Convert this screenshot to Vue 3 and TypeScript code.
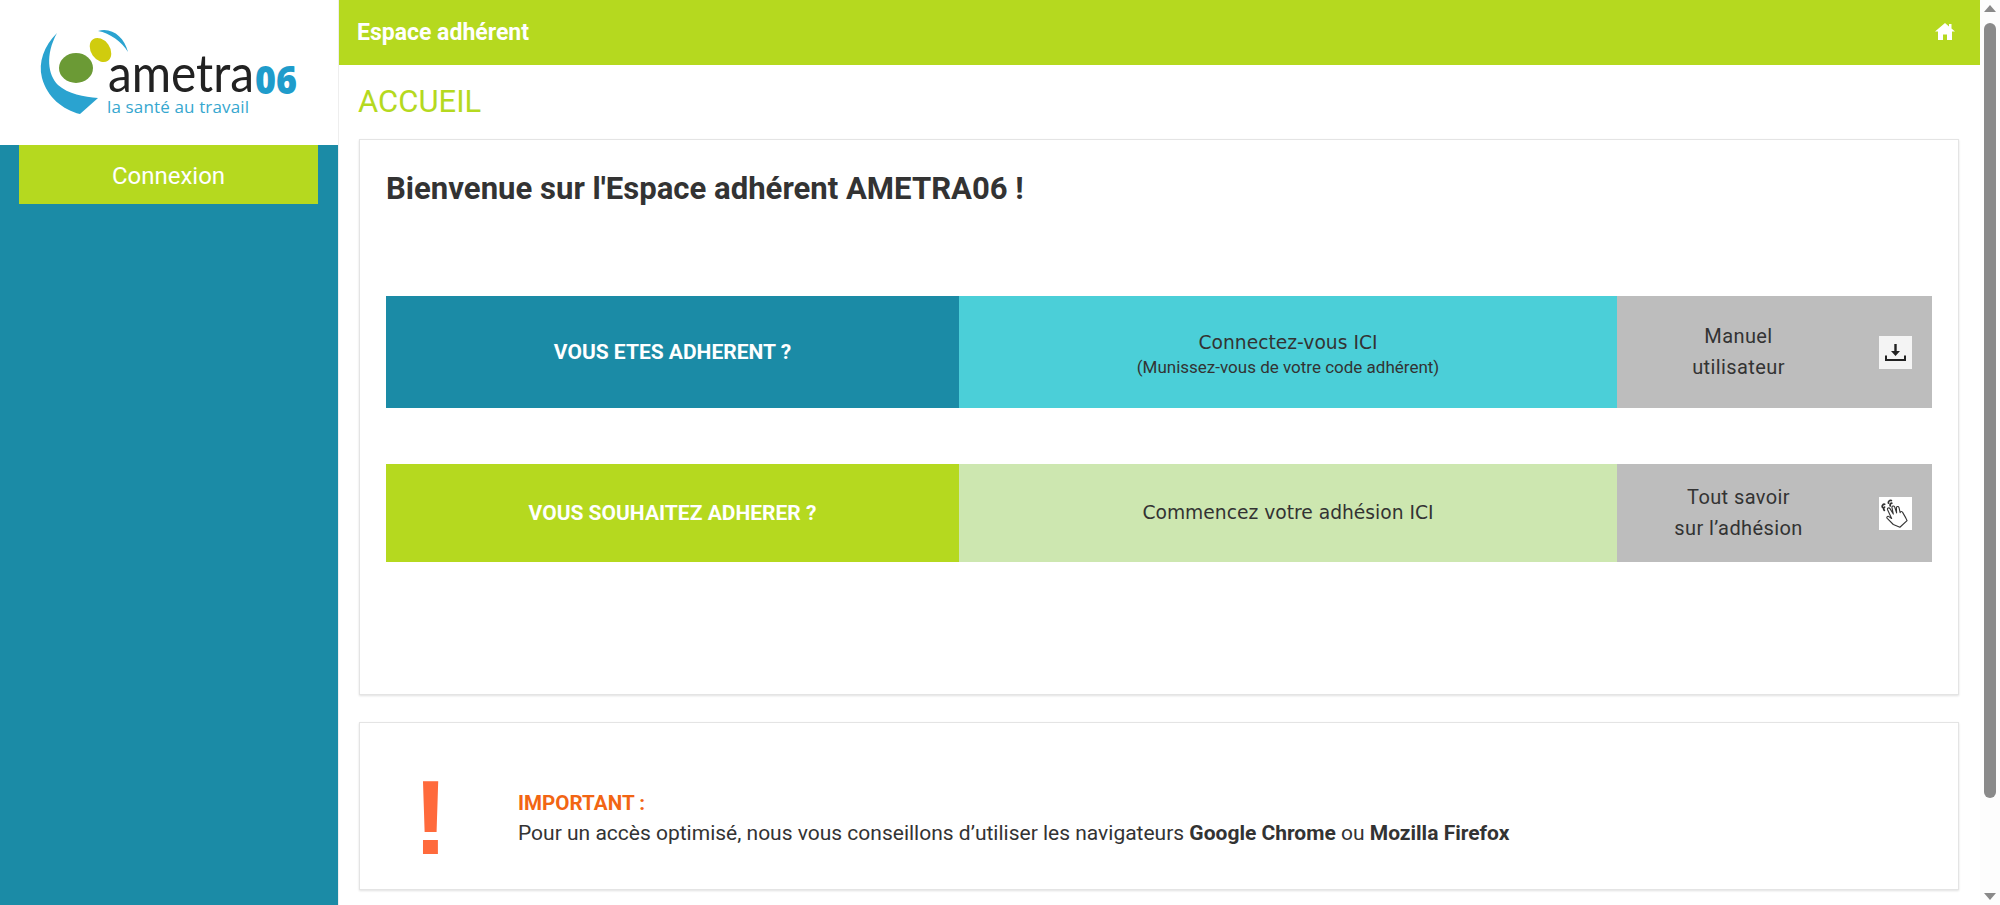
<script setup lang="ts">
interface Segment {
  title: string
  note?: string
}

interface Row {
  lead: string
  action: Segment
  side: string[]
  icon: 'download' | 'hand'
  tone: string
}

const rows: Row[] = [
  {
    lead: 'VOUS ETES ADHERENT ?',
    action: { title: 'Connectez-vous ICI', note: '(Munissez-vous de votre code adhérent)' },
    side: ['Manuel', 'utilisateur'],
    icon: 'download',
    tone: 'blue'
  },
  {
    lead: 'VOUS SOUHAITEZ ADHERER ?',
    action: { title: 'Commencez votre adhésion ICI' },
    side: ['Tout savoir', 'sur l’adhésion'],
    icon: 'hand',
    tone: 'green'
  }
]
</script>

<template>
  <div class="shell">
    <aside class="sidebar">
      <div class="logo">
        <svg width="338" height="145" viewBox="0 0 338 145">
          <path fill="#2aa3d0" d="M57 33C44 46 38 62 42 78C47 97 63 110 80 114L98 98C84 97 68 94 58 85C48 75 45 55 57 33Z" />
          <path fill="#2aa3d0" d="M98 31C112 27 124 37 128 52C122 42 110 33 98 31Z" />
          <ellipse cx="100.5" cy="50" rx="9.5" ry="13" transform="rotate(-35 100.5 50)" fill="#d0cc0e" />
          <ellipse cx="76" cy="68" rx="17" ry="15" fill="#6b9a35" />
          <text x="108" y="92" textLength="146" lengthAdjust="spacingAndGlyphs" class="logo-name">ametra</text>
          <text x="255" y="94" textLength="42" lengthAdjust="spacingAndGlyphs" class="logo-num">06</text>
          <text x="107" y="113" textLength="142" class="logo-tag">la santé au travail</text>
        </svg>
      </div>
      <a class="login">Connexion</a>
    </aside>

    <main class="main">
      <header class="topbar">
        <span class="topbar-title">Espace adhérent</span>
        <svg class="home" width="20" height="17" viewBox="0 0 20 17">
          <path fill="#fff" d="M10 0L0 8.5H3V17H8V11.5H12V17H17V8.5H20L16.5 5.5V1H14V3.4Z" />
        </svg>
      </header>

      <div class="content">
        <h1 class="page-title">ACCUEIL</h1>

        <section class="card welcome">
          <h2 class="welcome-title">Bienvenue sur l'Espace adhérent AMETRA06 !</h2>
          <div v-for="row in rows" :key="row.lead" class="row" :class="row.tone">
            <div class="lead">{{ row.lead }}</div>
            <div class="action">
              <span class="action-title">{{ row.action.title }}</span>
              <span v-if="row.action.note" class="action-note">{{ row.action.note }}</span>
            </div>
            <div class="side">
              <div class="side-label">
                <span v-for="line in row.side" :key="line">{{ line }}</span>
              </div>
              <div class="side-icon" :class="row.icon">
                <svg v-if="row.icon === 'download'" width="21" height="21" viewBox="0 0 21 21">
                  <path fill="#222" d="M9.3 2H11.7V9H15L10.5 14L6 9H9.3Z" />
                  <path fill="none" stroke="#222" stroke-width="2" d="M1 13.5V18H20V13.5" />
                </svg>
                <svg v-else width="33" height="33" viewBox="0 0 30 30" fill="none" stroke="#333" stroke-width="1" stroke-linejoin="round" stroke-linecap="round">
                  <path d="M13 25L7.5 19.5C6.6 18.5 7.6 17 9 17.8L11.5 19.5L7.8 11.5C7.2 10 9.2 9.2 10 10.6L13 15.5L11.8 9.6C11.5 8 13.6 7.6 14.2 9L16 14.5L15.8 9.8C15.8 8.3 17.8 8.2 18.2 9.6L19.2 14.2C19.4 12.8 21.2 12.8 21.6 14.2C23 16.5 24.5 19 25.5 21.5L19 27.5Z" />
                  <path d="M3.2 9.5C2.4 8 3.6 6.4 5.2 6.6M4.8 12.2C3.8 11 4.2 9.8 5 9.2M8.6 5.5C8.3 4.2 9.6 2.6 11.2 3.2M10.2 8C9.8 6.8 10.6 5.6 11.6 5.6" stroke-width="1.6" />
                </svg>
              </div>
            </div>
          </div>
        </section>

        <section class="card notice">
          <span class="mark">!</span>
          <div class="notice-text">
            <strong class="notice-title">IMPORTANT :</strong>
            <p>Pour un accès optimisé, nous vous conseillons d’utiliser les navigateurs <b>Google Chrome</b> ou <b>Mozilla Firefox</b></p>
          </div>
        </section>
      </div>
    </main>

    <div class="scrollbar">
      <span class="arrow up"></span>
      <span class="thumb"></span>
      <span class="arrow down"></span>
    </div>
  </div>
</template>

<style>
html,
body {
  margin: 0;
  height: 100%;
  overflow: hidden;
}
</style>

<style scoped>
.shell {
  display: flex;
  height: 905px;
  overflow: hidden;
  font-family: Roboto, "Liberation Sans", sans-serif;
  color: #333;
  background: #fff;
}

.sidebar {
  flex: 0 0 338px;
  background: #1b8ba6;
}

.logo {
  height: 145px;
  background: #fff;
}

.logo svg {
  display: block;
}

.logo-name {
  font-family: Lato, sans-serif;
  font-size: 52px;
  font-weight: 400;
  fill: #222;
}

.logo-num {
  font-family: "Open Sans", sans-serif;
  font-size: 39px;
  font-weight: 800;
  fill: #1f9ccb;
}

.logo-tag {
  font-family: "Open Sans", sans-serif;
  font-size: 17px;
  fill: #36a7cf;
}

.login {
  display: block;
  margin: 0 20px 0 19px;
  height: 59px;
  line-height: 62px;
  background: #b5d91f;
  color: #fff;
  text-align: center;
  font-size: 24px;
}

.main {
  flex: 1;
  min-width: 0;
  border-left: 1px solid #eee;
}

.topbar {
  display: flex;
  align-items: center;
  justify-content: space-between;
  height: 65px;
  padding: 0 25px 0 18px;
  background: #b5d91f;
  color: #fff;
}

.topbar-title {
  font-size: 23px;
  font-weight: 700;
}

.home {
  margin-bottom: 2px;
}

.content {
  padding: 0 21px 0 20px;
}

.page-title {
  margin: 0 0 0 -1px;
  height: 74px;
  line-height: 74px;
  font-size: 31px;
  font-weight: 400;
  color: #b5d91f;
}

.card {
  box-sizing: border-box;
  border: 1px solid #e4e4e4;
  box-shadow: 0 1px 2px rgba(0, 0, 0, 0.12);
  background: #fff;
}

.welcome {
  height: 556px;
  padding: 0 26px;
}

.welcome-title {
  margin: 0;
  height: 156px;
  line-height: 98px;
  font-size: 31.1px;
  font-weight: 700;
  color: #333;
}

.row {
  display: grid;
  grid-template-columns: 573px 658px 315px;
  height: 98px;
  margin-bottom: 56px;
}

.row.blue {
  height: 112px;
}

.lead {
  display: flex;
  align-items: center;
  justify-content: center;
  color: #fff;
  font-size: 21px;
  font-weight: 700;
}

.blue .lead {
  background: #1b8ba6;
}

.green .lead {
  background: #b5d91f;
}

.action {
  display: flex;
  flex-direction: column;
  align-items: center;
  justify-content: center;
}

.blue .action {
  padding-top: 4px;
  background: #4bcfd8;
}

.green .action {
  background: #cde7b0;
}

.action-title {
  font-family: "DejaVu Sans", sans-serif;
  font-size: 18.7px;
  line-height: 26px;
}

.action-note {
  font-size: 17px;
  line-height: 22px;
}

.side {
  display: flex;
  align-items: center;
  gap: 19px;
  padding-right: 20px;
  background: #bdbdbd;
}

.side-label {
  flex: 1;
  display: flex;
  flex-direction: column;
  align-items: center;
  font-size: 20px;
  line-height: 31px;
  letter-spacing: 0.4px;
}

.side-icon {
  display: flex;
  align-items: center;
  justify-content: center;
  width: 33px;
  height: 33px;
}

.side-icon.download {
  background: #f4f4f4;
}

.side-icon.hand {
  background: #fff;
}

.notice {
  display: flex;
  align-items: center;
  height: 168px;
  margin-top: 27px;
  padding-left: 59px;
}

.mark {
  width: 100px;
  margin-top: 22px;
  margin-left: -6px;
  margin-right: 5px;
  font-family: "Liberation Sans", sans-serif;
  font-size: 106px;
  font-weight: 700;
  line-height: 106px;
  color: #ff6a3c;
}

.notice-text {
  margin-top: 24px;
  font-size: 21px;
  line-height: 30px;
}

.notice-title {
  font-size: 20.6px;
  color: #f26513;
}

.notice-text p {
  margin: 0;
}

.scrollbar {
  position: relative;
  flex: 0 0 20px;
  background: #fdfdfd;
}

.arrow {
  position: absolute;
  left: 4px;
  width: 0;
  height: 0;
  border-left: 6px solid transparent;
  border-right: 6px solid transparent;
}

.arrow.up {
  top: 5px;
  border-bottom: 7px solid #8a8a8a;
}

.arrow.down {
  bottom: 5px;
  border-top: 7px solid #8a8a8a;
}

.thumb {
  position: absolute;
  top: 23px;
  left: 4px;
  width: 12px;
  height: 775px;
  border-radius: 6px;
  background: #8a8a8a;
}
</style>
